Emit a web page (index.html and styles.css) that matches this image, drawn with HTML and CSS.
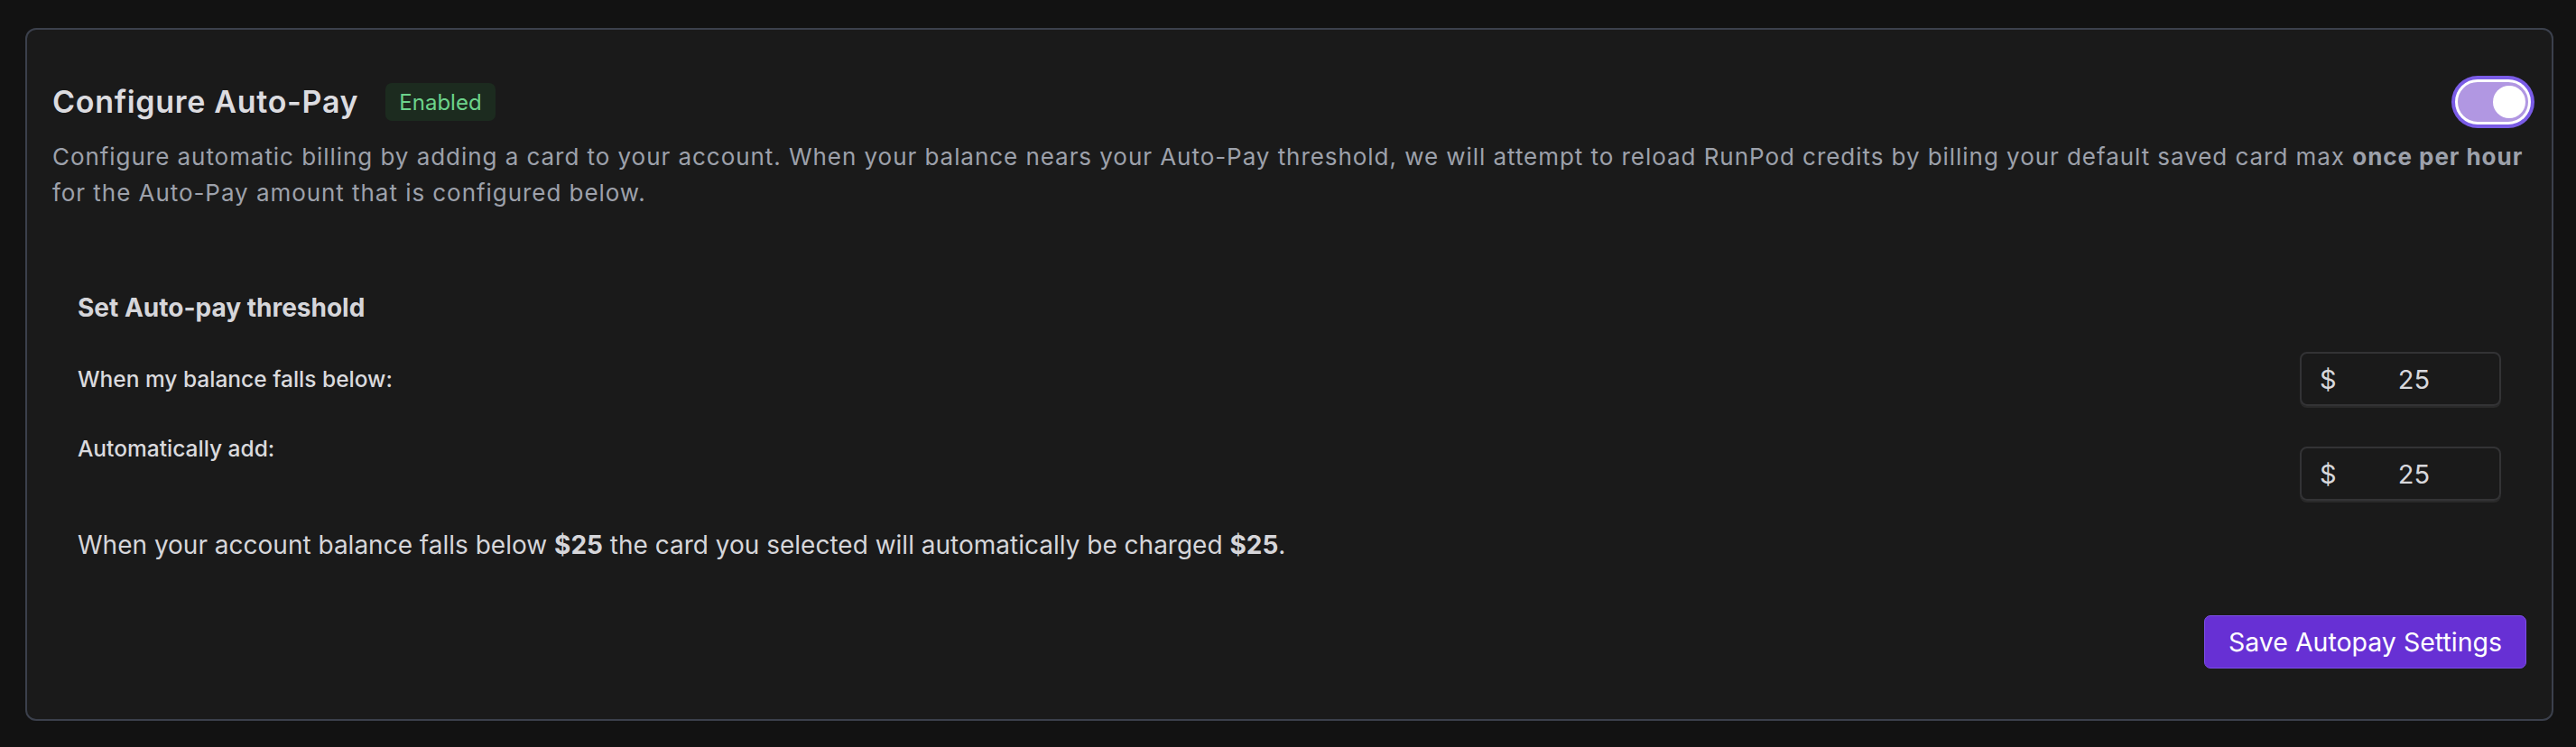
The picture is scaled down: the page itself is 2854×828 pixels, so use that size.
FILE: index.html
```html
<!DOCTYPE html>
<html lang="en">
<head>
<meta charset="utf-8">
<title>Configure Auto-Pay</title>
<link rel="stylesheet" href="styles.css">
</head>
<body>
<section class="card">
  <div class="card-header">
    <div class="title-group">
      <h2 class="title">Configure Auto-Pay</h2>
      <span class="badge">Enabled</span>
    </div>
    <button class="toggle" type="button" aria-pressed="true" aria-label="Toggle auto-pay"><span class="knob"></span></button>
  </div>
  <p class="desc">Configure automatic billing by adding a card to your account. When your balance nears your Auto-Pay threshold, we will attempt to reload RunPod credits by billing your default saved card max <strong>once per hour</strong> for the Auto-Pay amount that is configured below.</p>

  <div class="threshold">
    <h3 class="threshold-title">Set Auto-pay threshold</h3>
    <div class="fields">
      <div class="labels">
        <label class="field-label">When my balance falls below:</label>
        <label class="field-label">Automatically add:</label>
      </div>
      <div class="inputs">
        <div class="money"><span class="cur">$</span><span class="val">25</span></div>
        <div class="money"><span class="cur">$</span><span class="val">25</span></div>
      </div>
    </div>
    <p class="summary">When your account balance falls below <strong>$25</strong> the card you selected will automatically be charged <strong>$25</strong>.</p>
  </div>

  <div class="actions">
    <button class="save" type="button">Save Autopay Settings</button>
  </div>
</section>
</body>
</html>
```

FILE: styles.css
```css
* { box-sizing: border-box; }
html, body { margin: 0; }
body {
  background: #121212;
  padding: 31px 25px 0 28px;
  font-family: Inter, "Noto Sans", sans-serif;
  color: #d6d6da;
}
.card {
  background: #1a1a1a;
  border: 2px solid #3b404c;
  border-radius: 12px;
  padding: 51px 28px 56px 28px;
}
.card-header {
  display: flex;
  align-items: center;
  justify-content: space-between;
  height: 58px;
}
.title-group {
  display: flex;
  align-items: center;
  gap: 30px;
}
.title {
  margin: 0;
  font-size: 34px;
  font-weight: 600;
  letter-spacing: 0.7px;
  color: #dcdce0;
  line-height: 42px;
}
.badge {
  display: inline-flex;
  align-items: center;
  height: 42px;
  padding: 0 15px;
  background: #1c2b1f;
  color: #6cd38b;
  font-size: 24px;
  border-radius: 7px;
}
.toggle {
  position: relative;
  width: 84px;
  height: 50px;
  margin-right: -5px;
  padding: 0;
  border: 3px solid #ffffff;
  border-radius: 30px;
  background: #b197e2;
  box-shadow: 0 0 0 4px #7a5ce6;
  cursor: pointer;
}
.knob {
  position: absolute;
  right: 3px;
  top: 4px;
  width: 36px;
  height: 36px;
  border-radius: 50%;
  background: #ffffff;
}
.desc {
  margin: 12px 0 0 0;
  font-size: 26px;
  line-height: 40px;
  letter-spacing: 0.95px;
  color: #9da1ab;
}
.desc strong { font-weight: 700; }
.threshold {
  margin-top: 87px;
  padding: 0 28px;
}
.threshold-title {
  margin: 0;
  font-size: 28px;
  line-height: 40px;
  font-weight: 700;
  color: #d6d6da;
}
.fields {
  display: flex;
  justify-content: space-between;
  margin-top: 29px;
}
.labels {
  display: flex;
  flex-direction: column;
  gap: 41px;
  padding-top: 12px;
}
.field-label {
  font-size: 24.5px;
  line-height: 36px;
  font-weight: 500;
  color: #dadade;
}
.inputs {
  display: flex;
  flex-direction: column;
  gap: 45px;
}
.money {
  display: flex;
  align-items: center;
  width: 223px;
  height: 60px;
  border: 2px solid #333335;
  border-radius: 8px;
  box-shadow: 0 2px 0 #2a2a2a;
  padding-left: 20px;
  font-size: 29px;
  color: #d8d8dc;
}
.cur { width: 20px; }
.val {
  flex: 1;
  text-align: center;
  padding-right: 10px;
}
.summary {
  margin: 29px 0 0 0;
  font-size: 28px;
  line-height: 40px;
  color: #d6d6da;
}
.summary strong { font-weight: 700; }
.actions {
  display: flex;
  justify-content: flex-end;
  margin-top: 58px;
}
.save {
  height: 59px;
  padding: 0 26px;
  background: #6730d4;
  border: 1.5px solid #7d4fe6;
  border-radius: 7px;
  color: #ffffff;
  font-family: Inter, "Noto Sans", sans-serif;
  font-size: 28.5px;
  font-weight: 400;
  cursor: pointer;
}
```
